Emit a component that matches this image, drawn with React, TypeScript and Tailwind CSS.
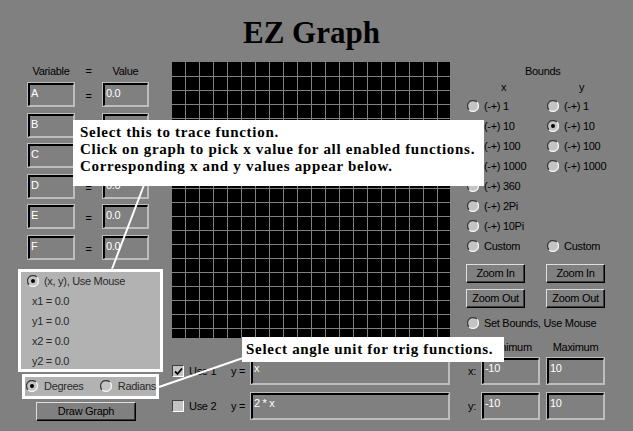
import React from 'react';

const sunkenOuter = 'border border-[#bdbdbd]';
const sunkenInner =
  'h-full w-full border-t-2 border-l-2 border-r border-b border-t-black border-l-black border-r-[#bdbdbd] border-b-[#bdbdbd] pl-[1px] pt-[1px] text-white leading-[14px]';
const raised =
  'flex items-center justify-center border border-t-[#dedede] border-l-[#dedede] border-r-black border-b-black shadow-[inset_-1px_-1px_0_#3a3a3a] text-black';

function Radio({ on }: { on?: boolean }) {
  return (
    <svg width="12" height="12" viewBox="0 0 12 12" className="shrink-0">
      <circle cx="6" cy="6" r="5.5" fill="#c4c4c4" />
      <path d="M2.1 9.9A5.5 5.5 0 0 1 9.9 2.1" fill="none" stroke="#3c3c3c" strokeWidth="1.3" />
      <path d="M9.9 2.1A5.5 5.5 0 0 1 2.1 9.9" fill="none" stroke="#f4f4f4" strokeWidth="1.3" />
      {on && <circle cx="6" cy="6" r="2" fill="#000" />}
    </svg>
  );
}

function Check({ on }: { on?: boolean }) {
  return (
    <div className="w-[12px] h-[12px] shrink-0 border border-t-[#404040] border-l-[#404040] border-r-white border-b-white bg-[#c4c4c4] flex items-center justify-center">
      {on && (
        <svg width="9" height="9" viewBox="0 0 9 9">
          <path d="M1 4.5 L3.5 7 L8 1.5" fill="none" stroke="#000" strokeWidth="1.8" />
        </svg>
      )}
    </div>
  );
}

function Box({ value, className }: { value: string; className: string }) {
  return (
    <div className={`${sunkenOuter} ${className}`}>
      <div className={sunkenInner}>{value}</div>
    </div>
  );
}

function Grid() {
  const xs = Array.from({ length: 19 }, (_, i) => 13.5 + i * 14);
  const ys = Array.from({ length: 19 }, (_, i) => 14.5 + i * 14);
  return (
    <svg width="278" height="276" viewBox="0 0 278 276" className="block">
      <rect width="278" height="276" fill="#000" />
      {xs.map((x) => (
        <line key={'x' + x} x1={x} y1="0" x2={x} y2="276" stroke="#808080" strokeWidth="1" />
      ))}
      {ys.map((y) => (
        <line key={'y' + y} x1="0" y1={y} x2="278" y2={y} stroke="#808080" strokeWidth="1" />
      ))}
    </svg>
  );
}

const vars = ['A', 'B', 'C', 'D', 'E', 'F'];
const bounds = [
  ['(-+) 1', '(-+) 1'],
  ['(-+) 10', '(-+) 10'],
  ['(-+) 100', '(-+) 100'],
  ['(-+) 1000', '(-+) 1000'],
  ['(-+) 360', ''],
  ['(-+) 2Pi', ''],
  ['(-+) 10Pi', ''],
  ['Custom', 'Custom'],
];

export default function App() {
  return (
    <div className="relative w-[633px] h-[431px] overflow-hidden bg-[#808080] font-['Liberation_Sans',Arial,sans-serif] text-[11px] tracking-[-0.3px] text-black">
      <div className="h-[62px] w-[623px] pt-[17px] text-center font-['Liberation_Serif',serif] font-bold text-[31px] leading-[31px] tracking-normal">
        EZ Graph
      </div>

      <div className="flex">
        {/* variables */}
        <div className="w-[172px] flex flex-col">
          <div className="h-[18px] flex items-center pl-[27px]">
            <span className="w-[48px] text-center">Variable</span>
            <span className="w-[27px] text-center">=</span>
            <span className="w-[47px] text-center">Value</span>
          </div>
          <div className="mt-[2px] flex flex-col gap-[5.6px]">
            {vars.map((v) => (
              <div key={v} className="h-[25px] flex items-center pl-[27px]">
                <Box value={v} className="w-[48px] h-[25px]" />
                <span className="w-[27px] text-center pt-[3px]">=</span>
                <Box value="0.0" className="w-[47px] h-[25px]" />
              </div>
            ))}
          </div>
          <div className="mt-[9px] ml-[18px] w-[145px] h-[103px] border-[3px] border-white bg-[#b2b2b2] text-[#2a2a2a]">
            <div className="h-[19px] flex items-center pl-[6px] gap-[5px]">
              <Radio on />
              <span>(x, y), Use Mouse</span>
            </div>
            {['x1 = 0.0', 'y1 = 0.0', 'x2 = 0.0', 'y2 = 0.0'].map((t) => (
              <div key={t} className="h-[20px] flex items-center pl-[11px]">
                {t}
              </div>
            ))}
          </div>
          <div className="mt-[2px] ml-[22px] w-[137px] h-[25px] border-[3px] border-white bg-[#b2b2b2] flex items-center pl-[1px] text-[#2a2a2a]">
            <Radio on />
            <span className="ml-[6px] w-[59px]">Degrees</span>
            <Radio />
            <span className="ml-[6px]">Radians</span>
          </div>
          <div className={`mt-[3px] ml-[36px] w-[100px] h-[19px] ${raised}`}>Draw Graph</div>
        </div>

        {/* graph */}
        <div className="w-[278px] flex flex-col">
          <Grid />
          <div className="mt-[19px] h-[28px] flex items-center">
            <Check on />
            <span className="ml-[5px] w-[42px]">Use 1</span>
            <span className="w-[19px]">y =</span>
            <Box value="x" className="w-[200px] h-[28px]" />
          </div>
          <div className="mt-[7px] h-[28px] flex items-center">
            <Check />
            <span className="ml-[5px] w-[42px]">Use 2</span>
            <span className="w-[19px]">y =</span>
            <Box value="2 * x" className="w-[200px] h-[28px]" />
          </div>
        </div>

        {/* bounds */}
        <div className="flex-1 flex flex-col">
          <div className="h-[18px] flex items-center pl-[75px]">Bounds</div>
          <div className="h-[14px] flex items-center">
            <span className="ml-[51px] w-[5px] text-center">x</span>
            <span className="ml-[73px] w-[5px] text-center">y</span>
          </div>
          <div className="mt-[2px] flex flex-col">
            {bounds.map(([a, b], i) => (
              <div key={i} className="h-[20px] flex items-center pl-[17px]">
                <div className="w-[80px] flex items-center gap-[5px]">
                  <Radio />
                  <span>{a}</span>
                </div>
                {b && (
                  <div className="flex items-center gap-[5px]">
                    <Radio on={i === 1} />
                    <span>{b}</span>
                  </div>
                )}
              </div>
            ))}
          </div>
          <div className="mt-[8px] flex pl-[16px] gap-[21px]">
            <div className={`w-[59px] h-[19px] ${raised}`}>Zoom In</div>
            <div className={`w-[59px] h-[19px] ${raised}`}>Zoom In</div>
          </div>
          <div className="mt-[6px] flex pl-[16px] gap-[21px]">
            <div className={`w-[59px] h-[19px] ${raised}`}>Zoom Out</div>
            <div className={`w-[59px] h-[19px] ${raised}`}>Zoom Out</div>
          </div>
          <div className="mt-[5px] h-[20px] flex items-center pl-[17px] gap-[5px]">
            <Radio />
            <span>Set Bounds, Use Mouse</span>
          </div>
          <div className="mt-[7px] h-[14px] flex items-center pl-[31px] gap-[6px]">
            <span className="w-[59px] text-center">Minimum</span>
            <span className="w-[59px] text-center">Maximum</span>
          </div>
          <div className="mt-[3px] h-[28px] flex items-center">
            <span className="w-[31px] pl-[18px]">x:</span>
            <Box value="-10" className="w-[59px] h-[28px]" />
            <Box value="10" className="ml-[6px] w-[59px] h-[28px]" />
          </div>
          <div className="mt-[7px] h-[28px] flex items-center">
            <span className="w-[31px] pl-[18px]">y:</span>
            <Box value="-10" className="w-[59px] h-[28px]" />
            <Box value="10" className="ml-[6px] w-[59px] h-[28px]" />
          </div>
        </div>
      </div>

      {/* callouts */}
      <svg className="absolute inset-0 pointer-events-none" width="633" height="431">
        <line x1="144" y1="185" x2="112" y2="269" stroke="#fff" strokeWidth="2" />
        <line x1="243" y1="358" x2="159" y2="387" stroke="#fff" strokeWidth="2" />
      </svg>
      <div className="absolute left-[73px] top-[120px] w-[411px] h-[66px] bg-white pl-[7px] pt-[4px] font-['Liberation_Serif',serif] font-bold text-[15px] leading-[17px] tracking-[0.7px] text-black whitespace-nowrap">
        <div>Select this to trace function.</div>
        <div>Click on graph to pick x value for all enabled functions.</div>
        <div>Corresponding x and y values appear below.</div>
      </div>
      <div className="absolute left-[242px] top-[337px] w-[262px] h-[25px] bg-white pl-[4px] flex items-center font-['Liberation_Serif',serif] font-bold text-[15px] tracking-[0.7px] text-black whitespace-nowrap">
        Select angle unit for trig functions.
      </div>
    </div>
  );
}
